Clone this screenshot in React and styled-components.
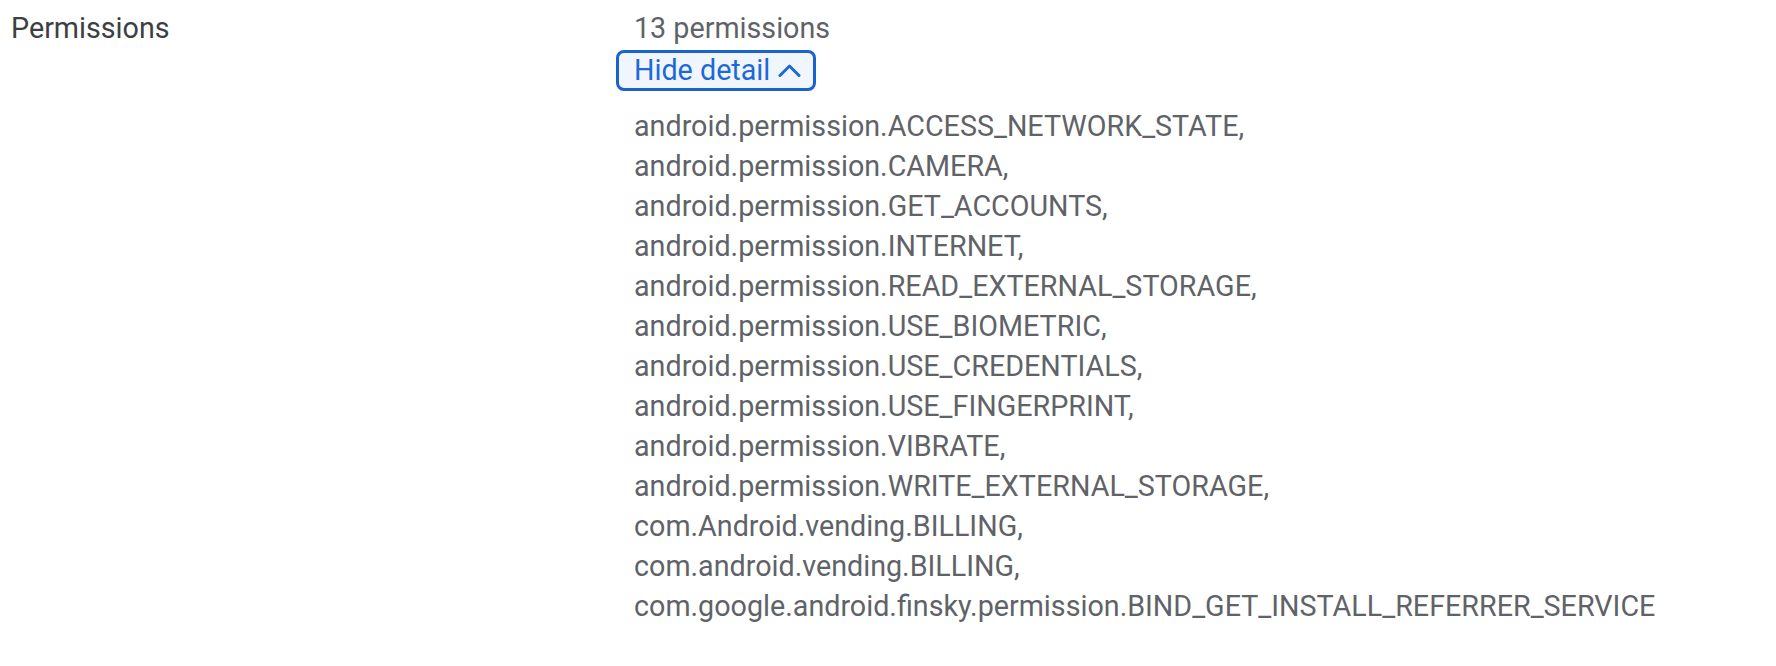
import React from "react";
import styled, { createGlobalStyle } from "styled-components";

const GlobalStyle = createGlobalStyle`
  html, body {
    margin: 0;
    padding: 0;
    background: #ffffff;
  }
  body {
    font-family: Roboto, "Noto Sans", "Liberation Sans", sans-serif;
  }
`;

const Page = styled.div`
  padding: 8px 0 0 11px;
`;

const Row = styled.div`
  display: grid;
  grid-template-columns: 623px 1fr;
  align-items: start;
`;

const Label = styled.div`
  font-size: 28.7px;
  line-height: 40px;
  color: #3c4043;
`;

const Value = styled.div`
  display: flex;
  flex-direction: column;
  align-items: flex-start;
`;

const Count = styled.div`
  font-size: 28.7px;
  line-height: 40px;
  color: #5f6368;
`;

const ToggleButton = styled.button`
  display: inline-flex;
  align-items: center;
  gap: 8px;
  margin: 2px 0 0 -18px;
  height: 41px;
  padding: 0 12px 0 15px;
  border: 3px solid #1a62cc;
  border-radius: 8px;
  background: #f1f6fe;
  color: #1a6ad8;
  font-family: Roboto, "Noto Sans", "Liberation Sans", sans-serif;
  font-size: 28.7px;
  line-height: 1;
  cursor: pointer;
`;

const List = styled.ul`
  list-style: none;
  margin: 15px 0 0 0;
  padding: 0;
`;

const Item = styled.li`
  font-size: 28.7px;
  line-height: 40px;
  color: #5f6368;
`;

const permissions = [
  "android.permission.ACCESS_NETWORK_STATE",
  "android.permission.CAMERA",
  "android.permission.GET_ACCOUNTS",
  "android.permission.INTERNET",
  "android.permission.READ_EXTERNAL_STORAGE",
  "android.permission.USE_BIOMETRIC",
  "android.permission.USE_CREDENTIALS",
  "android.permission.USE_FINGERPRINT",
  "android.permission.VIBRATE",
  "android.permission.WRITE_EXTERNAL_STORAGE",
  "com.Android.vending.BILLING",
  "com.android.vending.BILLING",
  "com.google.android.finsky.permission.BIND_GET_INSTALL_REFERRER_SERVICE",
];

function ChevronUp() {
  return (
    <svg width="23" height="13" viewBox="0 0 23 13" fill="none">
      <path
        d="M2 11.5 L11.5 2 L21 11.5"
        stroke="currentColor"
        strokeWidth="3"
        strokeLinecap="round"
        strokeLinejoin="round"
      />
    </svg>
  );
}

export default function App() {
  return (
    <>
      <GlobalStyle />
      <Page>
        <Row>
          <Label>Permissions</Label>
          <Value>
            <Count>13 permissions</Count>
            <ToggleButton type="button">
              Hide detail
              <ChevronUp />
            </ToggleButton>
            <List>
              {permissions.map((p, i) => (
                <Item key={p}>
                  {p}
                  {i < permissions.length - 1 ? "," : ""}
                </Item>
              ))}
            </List>
          </Value>
        </Row>
      </Page>
    </>
  );
}
